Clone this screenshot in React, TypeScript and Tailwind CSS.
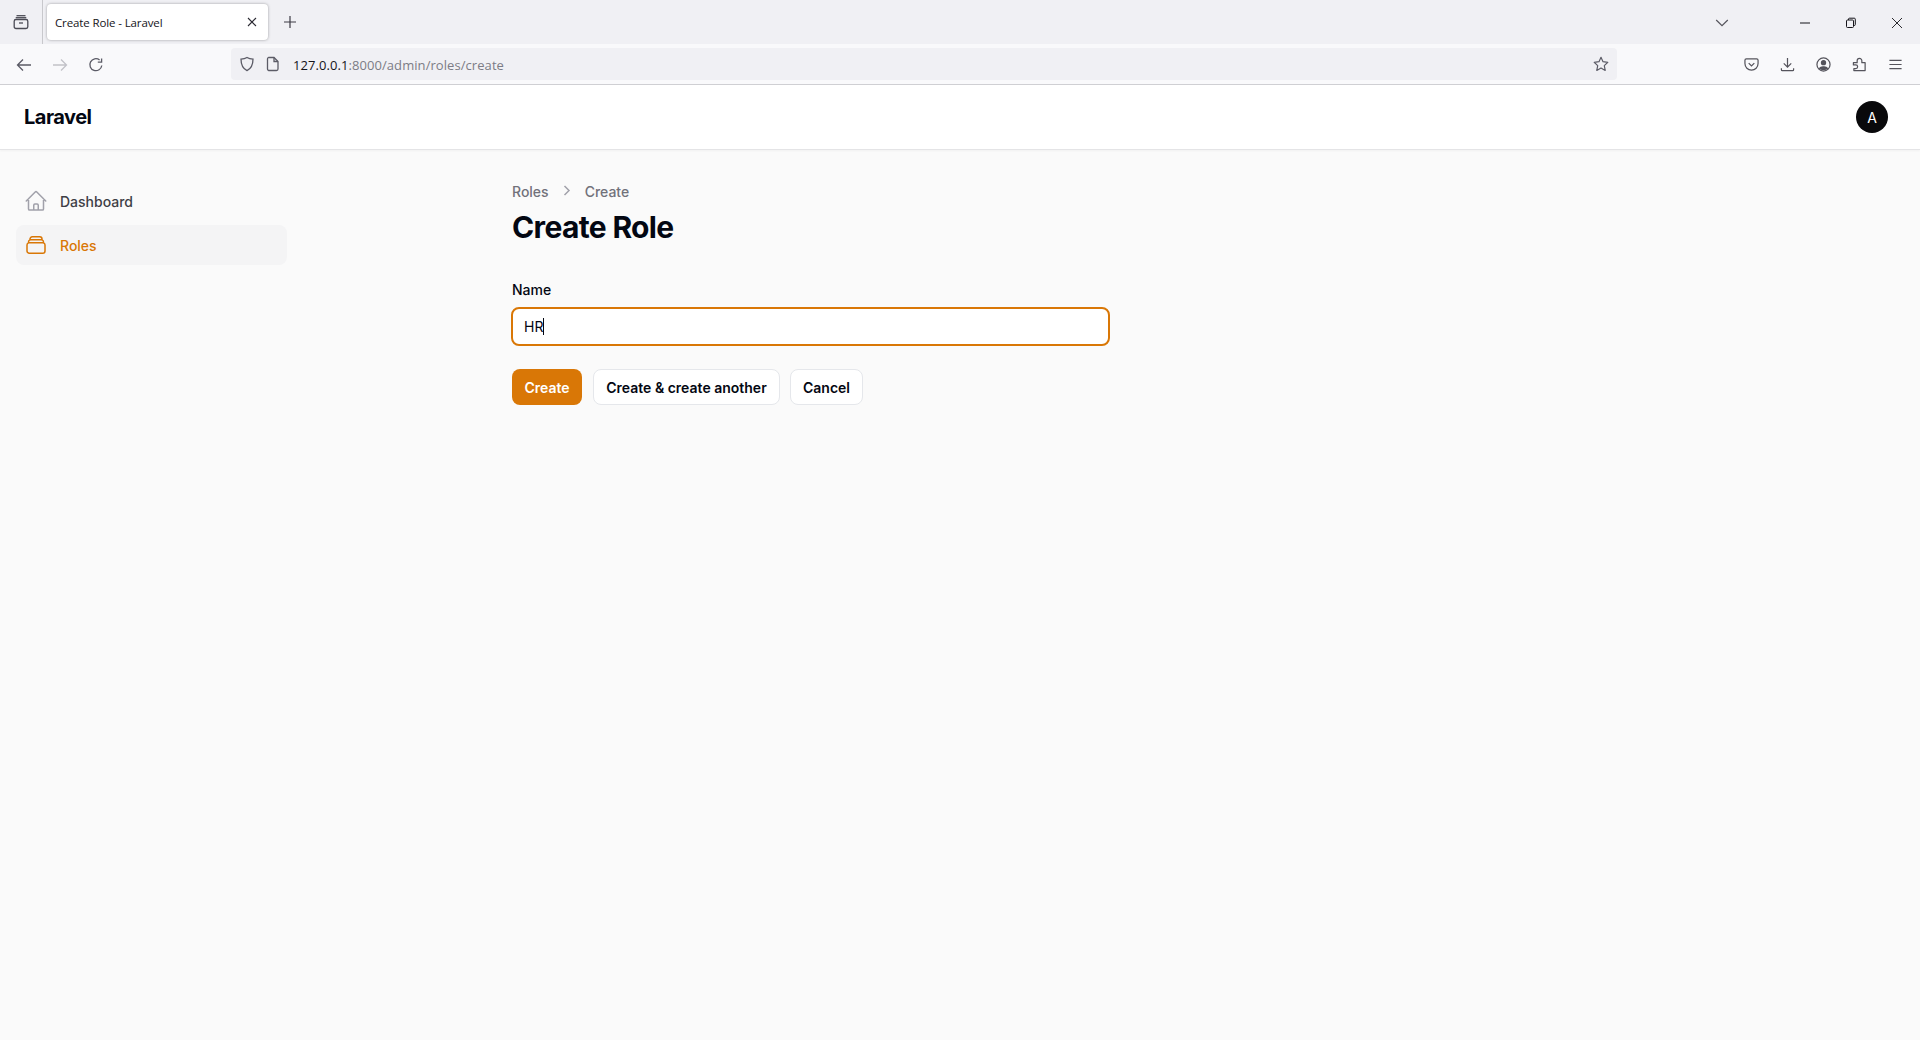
import React from "react";

const ic = "fill-none stroke-current";

function Chrome() {
  return (
    <div className="font-['Open_Sans',sans-serif]">
      <div className="h-[44px] bg-[#f0f0f4] flex items-start relative">
        <div className="w-[41px] h-[44px] flex items-center justify-center text-[#4b4b55]">
          <svg width="16" height="16" viewBox="0 0 16 16" className={ic} strokeWidth="1.3">
            <path d="M3.5 1.7h9" />
            <path d="M2.7 3.7h10.6" />
            <rect x="1.2" y="5.5" width="13.6" height="9" rx="1.8" />
            <path d="M6 9h4" />
          </svg>
        </div>
        <div className="ml-px w-px h-[44px] bg-[#c8c8cc]" />
        <div className="ml-1 mt-1 w-[221px] h-[36px] bg-white rounded-[4px] shadow-[0_0_3px_rgba(0,0,0,0.35)] flex items-center pl-[8px] pr-[10px] justify-between">
          <span className="pt-[1px] text-[11.5px] text-[#15141a] tracking-[-0.12px]">Create Role - Laravel</span>
          <svg width="12" height="12" viewBox="0 0 12 12" className={`${ic} text-[#2b2a33]`} strokeWidth="1.1">
            <path d="M2 2l8 8M10 2l-8 8" />
          </svg>
        </div>
        <div className="ml-[15px] mt-[15px] text-[#3c3b44]">
          <svg width="14" height="14" viewBox="0 0 14 14" className={ic} strokeWidth="1.2">
            <path d="M7 1v12M1 7h12" />
          </svg>
        </div>
        <div className="ml-auto flex items-center h-[44px] pt-[1px]">
          <svg width="14" height="14" viewBox="0 0 14 14" className={`${ic} text-[#55545c] mr-[70px]`} strokeWidth="1.2">
            <path d="M1.2 4l5.8 5.6L12.8 4" />
          </svg>
          <svg width="12" height="12" viewBox="0 0 12 12" className={`${ic} text-[#15141a] mr-[34px]`} strokeWidth="1">
            <path d="M1 6h10" />
          </svg>
          <svg width="12" height="12" viewBox="0 0 12 12" className={`${ic} text-[#15141a] mr-[34px]`} strokeWidth="1">
            <rect x="1.5" y="3" width="7" height="7.5" rx="1" />
            <path d="M3.5 3V2.2a1 1 0 0 1 1-1h4.8a1 1 0 0 1 1 1v5.3a1 1 0 0 1-1 1h-.8" />
          </svg>
          <svg width="12" height="12" viewBox="0 0 12 12" className={`${ic} text-[#15141a] mr-[17px]`} strokeWidth="0.9">
            <path d="M1 1l10 10M11 1L1 11" />
          </svg>
        </div>
      </div>
      <div className="h-[41px] bg-[#f9f9fb] border-b border-[#cfcfd3] flex items-start text-[#5b5b66]">
        <div className="w-[231px] h-[40px] flex items-center pl-[16px] pt-[2px] gap-[20px]">
          <svg width="16" height="16" viewBox="0 0 16 16" className={ic} strokeWidth="1.3">
            <path d="M15 8H1.5M7 2.5L1.5 8 7 13.5" />
          </svg>
          <svg width="16" height="16" viewBox="0 0 16 16" className={`${ic} text-[#c2c2c8]`} strokeWidth="1.3">
            <path d="M1 8h13.5M9 2.5L14.5 8 9 13.5" />
          </svg>
          <svg width="16" height="16" viewBox="0 0 16 16" className={ic} strokeWidth="1.3">
            <path d="M13.8 8.5A6 6 0 1 1 11.6 3" />
            <path d="M13.6 1.4v3.8H9.8" />
          </svg>
        </div>
        <div className="mt-1 w-[1386px] h-[32px] bg-[#f0f0f4] rounded-[4px] flex items-center pl-[8px] pr-[8px]">
          <svg width="16" height="16" viewBox="0 0 16 16" className={ic} strokeWidth="1.3">
            <path d="M8 1.5c2 1.2 3.8 1.5 6 1.6 0 5.5-1.5 9.5-6 11.5C3.5 12.600 2 8.600 2 3.100c2.200-.1 4-.4 6-1.600z" />
          </svg>
          <svg width="14" height="16" viewBox="0 0 14 16" className={`${ic} ml-[11px]`} strokeWidth="1.3">
            <path d="M2.500 1.500h5.500l4 4v7.500a1.500 1.500 0 0 1-1.500 1.500h-8a1.500 1.500 0 0 1-1-1.500v-10a1.500 1.500 0 0 1 1-1.500z" />
            <path d="M8 1.500v4h4" />
          </svg>
          <span className="ml-[13px] pt-[3px] text-[13px] tracking-[0.07px] text-[#15141a]">
            127.0.0.1<span className="text-[#7c7c85]">:8000/admin/roles/create</span>
          </span>
          <svg width="16" height="16" viewBox="0 0 16 16" className={`${ic} ml-auto`} strokeWidth="1.2">
            <path d="M8 1.300l2 4.400 4.800.6-3.500 3.300.9 4.800L8 12l-4.200 2.400.9-4.800L1.200 6.300 6 5.700z" strokeLinejoin="round" />
          </svg>
        </div>
        <div className="flex-1 h-[40px] flex items-center pl-[127px] pt-[1px] gap-[21px] text-[#55545c]">
          <svg width="15" height="15" viewBox="0 0 16 16" className={ic} strokeWidth="1.300">
            <path d="M2.500 2h11A1.500 1.500 0 0 1 15 3.500V7a7 7 0 0 1-14 0V3.500A1.500 1.500 0 0 1 2.500 2z" />
            <path d="M5 6.500l3 3 3-3" />
          </svg>
          <svg width="15" height="15" viewBox="0 0 16 16" className={ic} strokeWidth="1.300">
            <path d="M8 1v9.500M4 6.800l4 4 4-4M1.500 12v1.500a1 1 0 0 0 1 1h11a1 1 0 0 0 1-1V12" />
          </svg>
          <svg width="15" height="15" viewBox="0 0 16 16" className={ic} strokeWidth="1.300">
            <circle cx="8" cy="8" r="7" />
            <circle cx="8" cy="6" r="2.200" className="fill-current" />
            <path d="M3.800 12c1-2 7.400-2 8.400 0-2 1.800-6.400 1.800-8.400 0z" className="fill-current" />
          </svg>
          <svg width="15" height="15" viewBox="0 0 16 16" className={ic} strokeWidth="1.300">
            <path d="M1.500 6H5.500V4a2.500 2.500 0 0 1 5 0V6H14V14.500H2V12.500H4a2 2 0 0 0 0-4H1.500z" strokeLinejoin="round" />
          </svg>
          <svg width="15" height="15" viewBox="0 0 16 16" className={ic} strokeWidth="1.300">
            <path d="M1.500 3.500h13M1.500 8h13M1.500 12.500h13" />
          </svg>
        </div>
      </div>
    </div>
  );
}

export default function App() {
  return (
    <div className="h-[1040px] overflow-hidden bg-[#fafafa] flex flex-col font-['Inter',sans-serif]">
      <Chrome />
      <header className="h-[65px] bg-white border-b border-[#e4e4e6] shadow-[0_1px_2px_rgba(0,0,0,0.04)] flex items-center justify-between pl-[24px] pr-[32px]">
        <span className="text-[20px] font-bold tracking-[-0.5px] text-[#030712]">Laravel</span>
        <div className="w-8 h-8 rounded-full bg-[#09090b] text-white text-[14px] flex items-center justify-center">A</div>
      </header>
      <div className="flex flex-1">
        <aside className="w-[512px] pl-[16px] pt-[31px] flex flex-col gap-[4px]">
          <div className="w-[272px] h-[40px] rounded-[8px] flex items-center pl-[8px] gap-[12px] text-[14px] font-medium text-[#3f3f46]">
            <svg width="24" height="24" viewBox="0 0 24 24" className="fill-none stroke-[#a1a1aa]" strokeWidth="1.500" strokeLinecap="round" strokeLinejoin="round">
              <path d="M2.250 12l8.954-8.955c.44-.439 1.152-.439 1.591 0L21.750 12M4.500 9.750v10.125c0 .621.504 1.125 1.125 1.125H9.750v-4.875c0-.621.504-1.125 1.125-1.125h2.250c.621 0 1.125.504 1.125 1.125V21h4.125c.621 0 1.125-.504 1.125-1.125V9.750M8.250 21h8.250" />
            </svg>
            <span>Dashboard</span>
          </div>
          <div className="w-[271px] h-[40px] rounded-[8px] bg-[#f4f4f5] flex items-center pl-[8px] gap-[12px] text-[14px] font-medium text-[#d97706]">
            <svg width="24" height="24" viewBox="0 0 24 24" className="fill-none stroke-[#d97706]" strokeWidth="1.500" strokeLinecap="round" strokeLinejoin="round">
              <path d="M6 6.878V6a2.250 2.250 0 012.250-2.250h7.500A2.250 2.250 0 0118 6v.878m-12 0c.235-.083.487-.128.750-.128h10.500c.263 0 .515.045.750.128m-12 0A2.250 2.250 0 004.500 9v.878m13.500-3A2.250 2.250 0 0119.500 9v.878m0 0a2.246 2.246 0 00-.750-.128H5.250c-.263 0-.515.045-.750.128m15 0A2.250 2.250 0 0121 12v6a2.250 2.250 0 01-2.250 2.250H5.250A2.250 2.250 0 013 18v-6c0-.98.626-1.813 1.500-2.122" />
            </svg>
            <span>Roles</span>
          </div>
        </aside>
        <main className="w-[600px] pt-[31px]">
          <nav className="flex items-center h-[20px] text-[14px] font-medium text-[#71717a]">
            <span>Roles</span>
            <svg width="20" height="20" viewBox="0 0 20 20" className="mx-[8px] text-[#a1a1aa] fill-none stroke-current" strokeWidth="1.500">
              <path d="M7.500 5L12 9.500 7.500 14" />
            </svg>
            <span>Create</span>
          </nav>
          <h1 className="mt-[8px] text-[30px] leading-[36px] font-bold tracking-[-0.65px] text-[#030712]">Create Role</h1>
          <label className="block mt-[35px] text-[14px] leading-[20px] font-medium text-[#030712]">Name</label>
          <div className="mt-[7px] -ml-[1px] w-[599px] h-[39px] rounded-[8px] bg-white border-2 border-[#d97706] flex items-center pl-[11px] text-[14px] text-[#030712]">
            <span>HR</span>
            <span className="w-px h-[17px] bg-[#030712]" />
          </div>
          <div className="mt-[23px] flex gap-[10px] text-[14px] font-semibold">
            <button className="h-[36px] w-[70px] mr-px rounded-[8px] bg-[#d97706] text-white">Create</button>
            <button className="h-[36px] w-[187px] rounded-[8px] bg-white border border-[#e5e7eb] text-[#030712]">Create &amp; create another</button>
            <button className="h-[36px] px-[12px] rounded-[8px] bg-white border border-[#e5e7eb] text-[#030712]">Cancel</button>
          </div>
        </main>
      </div>
    </div>
  );
}
